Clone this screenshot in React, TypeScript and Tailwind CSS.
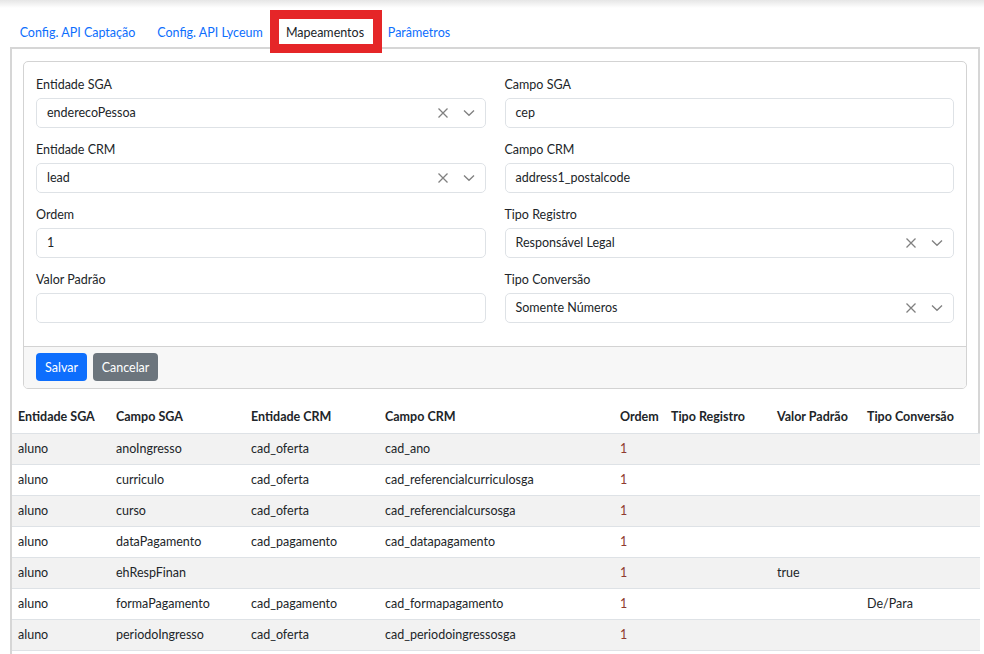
import React from "react";

const XIcon = () => (
  <svg width="12" height="12" viewBox="0 0 12 12" fill="none" stroke="#808080" strokeWidth="1.3">
    <path d="M1.5 1.5 L10.5 10.5 M10.5 1.5 L1.5 10.5" />
  </svg>
);
const Chevron = () => (
  <svg width="12" height="8" viewBox="0 0 12 8" fill="none" stroke="#808080" strokeWidth="1.3">
    <path d="M1 1.5 L6 6.3 L11 1.5" />
  </svg>
);

function Select({ value }: { value: string }) {
  return (
    <div className="h-[30px] border border-[#dee2e6] rounded-[5px] flex items-center pl-[10px] pr-[10px] bg-white">
      <span className="flex-1 text-[#212529] pt-[1px]">{value}</span>
      <span className="flex items-center mr-[14px]"><XIcon /></span>
      <span className="flex items-center"><Chevron /></span>
    </div>
  );
}
function Input({ value }: { value: string }) {
  return (
    <div className="h-[30px] border border-[#dee2e6] rounded-[5px] flex items-center pl-[10px] pt-[1px] bg-white text-[#212529]">
      {value}
    </div>
  );
}
function Field({ label, children }: { label: string; children: React.ReactNode }) {
  return (
    <div className="mb-[11px]">
      <div className="leading-[21px] mb-[3px] text-[#212529]">{label}</div>
      {children}
    </div>
  );
}

const rows = [
  ["aluno", "anoIngresso", "cad_oferta", "cad_ano", "1", "", "", ""],
  ["aluno", "curriculo", "cad_oferta", "cad_referencialcurriculosga", "1", "", "", ""],
  ["aluno", "curso", "cad_oferta", "cad_referencialcursosga", "1", "", "", ""],
  ["aluno", "dataPagamento", "cad_pagamento", "cad_datapagamento", "1", "", "", ""],
  ["aluno", "ehRespFinan", "", "", "1", "", "true", ""],
  ["aluno", "formaPagamento", "cad_pagamento", "cad_formapagamento", "1", "", "", "De/Para"],
  ["aluno", "periodoIngresso", "cad_oferta", "cad_periodoingressosga", "1", "", "", ""],
  ["", "", "", "", "", "", "", ""],
];
const headers = ["Entidade SGA", "Campo SGA", "Entidade CRM", "Campo CRM", "Ordem", "Tipo Registro", "Valor Padrão", "Tipo Conversão"];
const widths = ["w-[98px]", "w-[135px]", "w-[134px]", "w-[235px]", "w-[51px]", "w-[106px]", "w-[90px]", "w-[119px]"];

export default function App() {
  return (
    <div className="relative w-[984px] h-[654px] overflow-hidden bg-white text-[12.5px] text-[#212529]" style={{ fontFamily: 'Lato, "Noto Sans", sans-serif' }}>
      <div className="h-[8px] bg-gradient-to-b from-[#e6e6e6] to-white" />
      <div className="flex pl-[9px] mt-[11px] h-[28px] items-stretch">
        <div className="w-[137px] flex items-center justify-center text-[#0d6efd]">Config. API Captação</div>
        <div className="w-[128px] flex items-center justify-center text-[#0d6efd]">Config. API Lyceum</div>
        <div className="relative w-[102px] flex items-center justify-center text-[#212529] bg-white">
          Mapeamentos
          <div className="absolute left-[-4px] right-[-6px] top-[-9px] bottom-[-6px] border-[9px] border-[#e52628]" />
        </div>
        <div className="w-[86px] flex items-center justify-center text-[#0d6efd]">Parâmetros</div>
      </div>
      <div className="ml-[10px] mr-[4px] border-l-[2px] border-t-[2px] border-r-[2px] border-[#d6d6d6] pt-[12px] h-[700px]">
        <div className="mx-[11px] border border-[#d3d3d3] rounded-[5px] overflow-hidden">
          <div className="px-[12px] pt-[12px] pb-[12px] grid grid-cols-2 gap-x-[19px]">
            <div>
              <Field label="Entidade SGA"><Select value="enderecoPessoa" /></Field>
              <Field label="Entidade CRM"><Select value="lead" /></Field>
              <Field label="Ordem"><Input value="1" /></Field>
              <Field label="Valor Padrão"><Input value="" /></Field>
            </div>
            <div>
              <Field label="Campo SGA"><Input value="cep" /></Field>
              <Field label="Campo CRM"><Input value="address1_postalcode" /></Field>
              <Field label="Tipo Registro"><Select value="Responsável Legal" /></Field>
              <Field label="Tipo Conversão"><Select value="Somente Números" /></Field>
            </div>
          </div>
          <div className="bg-[#f7f7f7] border-t border-[#d3d3d3] px-[12px] pt-[6px] pb-[7px] flex gap-[6px]">
            <button className="h-[28px] w-[51px] rounded-[4px] bg-[#0d6efd] text-white pt-[2px]">Salvar</button>
            <button className="h-[28px] w-[65px] rounded-[4px] bg-[#6c757d] text-white pt-[2px]">Cancelar</button>
          </div>
        </div>
        <table className="mt-[12px] border-collapse table-fixed w-[968px]">
          <thead>
            <tr className="h-[32px] border-b border-[#dee2e6]">
              {headers.map((h, i) => (
                <th key={i} className={`${widths[i]} text-left font-bold px-[6px] pt-[2px] whitespace-nowrap`}>{h}</th>
              ))}
            </tr>
          </thead>
          <tbody>
            {rows.map((r, ri) => (
              <tr key={ri} className={`h-[31px] border-b border-[#dee2e6] ${ri % 2 === 0 ? "bg-[#f2f2f2]" : "bg-white"}`}>
                {r.map((c, ci) => (
                  <td key={ci} className={`px-[6px] pt-[1px] whitespace-nowrap ${ci === 4 ? "text-[#8f3a2f]" : ""}`}>{c}</td>
                ))}
              </tr>
            ))}
          </tbody>
        </table>
      </div>
    </div>
  );
}
